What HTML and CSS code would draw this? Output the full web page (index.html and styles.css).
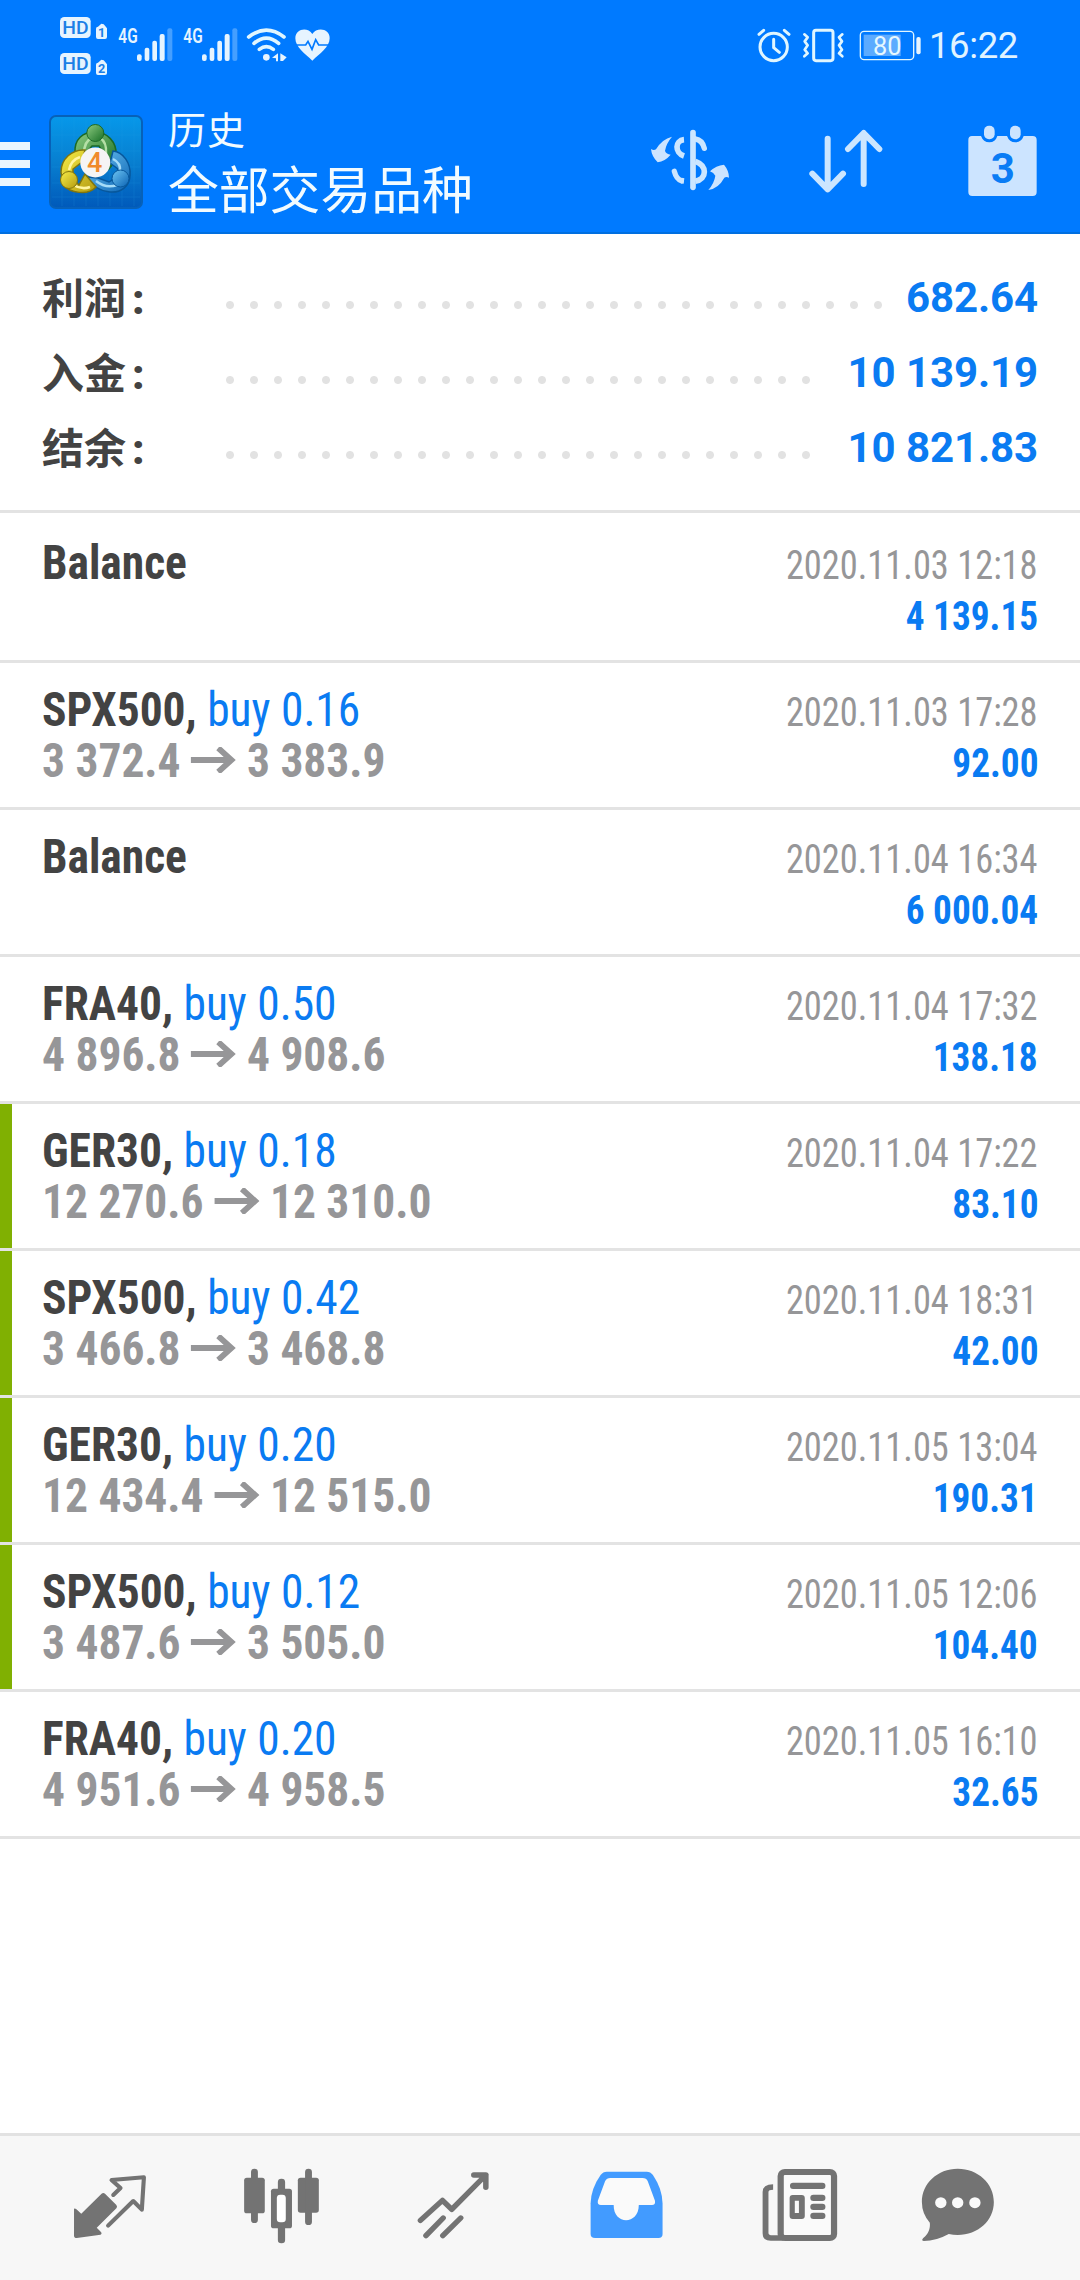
FILE: index.html
```html
<!DOCTYPE html>
<html lang="zh-CN">
<head>
<meta charset="utf-8">
<title>历史</title>
<link rel="stylesheet" href="styles.css">
</head>
<body>
<div class="screen">
  <header class="header">
    <div class="status">
      <svg class="status-left" width="290" height="92" viewBox="0 0 870 276">
        <g class="pale">
          <rect x="0" y="51" width="92" height="63" rx="13"/>
          <path d="M108 86q0-6 6-6l10-9q9 0 11 6l6 8v26q0 6-6 6h-21q-6 0-6-6z"/>
          <rect x="0" y="159" width="92" height="63" rx="13"/>
          <path d="M108 194q0-6 6-6l10-9q9 0 11 6l6 8v26q0 6-6 6h-21q-6 0-6-6z"/>
        </g>
        <g class="cut">
          <text class="hd" x="7" y="103" textLength="79" lengthAdjust="spacingAndGlyphs">HD</text>
          <text class="sim" x="114" y="110">1</text>
          <text class="hd" x="7" y="211" textLength="79" lengthAdjust="spacingAndGlyphs">HD</text>
          <text class="sim" x="114" y="218">2</text>
        </g>
        <g id="signal">
          <text class="net" x="175" y="128" textLength="58" lengthAdjust="spacingAndGlyphs">4G</text>
          <g class="pale">
            <rect x="231" y="163" width="14" height="20" rx="6"/>
            <rect x="254" y="143" width="14" height="40" rx="6"/>
            <rect x="277" y="122" width="14" height="61" rx="6"/>
            <rect x="299" y="102" width="15" height="81" rx="6"/>
            <rect x="322" y="85" width="15" height="98" rx="6" opacity=".3"/>
          </g>
        </g>
        <use href="#signal" x="195"/>
        <g class="pale-line" stroke-width="11">
          <path d="M566 111Q619 70 672 111M582 130Q619 99 656 130M598 148Q619 132 640 148"/>
        </g>
        <g class="pale">
          <circle cx="619" cy="172" r="10"/>
          <path d="M654 160v24h-6v-9l-12-2zM661 160l19 12-11 11h-8z"/>
          <path d="M757 182C736 162 706 142 706 115C706 86 743 80 757 102C771 80 810 86 809 115C809 142 778 162 757 182z"/>
        </g>
        <path class="cut-line" stroke-width="5" d="M706 135h31l7-11 12 24 11-29 9 16h34"/>
      </svg>
      <div class="status-right">
        <svg width="166" height="92" viewBox="50 0 498 276">
          <g class="pale-line" stroke-width="9">
            <circle cx="100" cy="141" r="41"/>
            <path d="M100 118v25l17 14M56 103l14-12M132 91l14 12"/>
            <rect x="220" y="91" width="58" height="91" rx="7"/>
            <path stroke-width="8" d="M192 103l10 9-9 12 9 12-9 13 9 11-10 9M306 103l-10 9 9 12-9 12 9 13-9 11 10 9"/>
            <rect x="360" y="94" width="160" height="85" rx="11" stroke-width="4"/>
          </g>
          <rect class="pale" x="370" y="104" width="111" height="64" opacity=".4"/>
          <rect class="pale" x="528" y="111" width="13" height="52" rx="6"/>
          <text class="level" x="398" y="164">80</text>
        </svg>
        <span class="clock">16:22</span>
      </div>
    </div>
    <div class="appbar">
      <div class="menu"><i></i><i></i><i></i></div>
      <svg class="logo" width="94" height="94" viewBox="0 0 94 94">
        <defs>
          <linearGradient id="tile" x2="0" y2="1"><stop offset="0" stop-color="#0698ea"/><stop offset=".5" stop-color="#087fd0"/><stop offset="1" stop-color="#0059ba"/></linearGradient>
          <linearGradient id="green" x2="1" y2="1"><stop stop-color="#8dcb80"/><stop offset="1" stop-color="#176e25"/></linearGradient>
          <linearGradient id="gold" x2="1" y2="1"><stop stop-color="#f7ee48"/><stop offset="1" stop-color="#b39a10"/></linearGradient>
          <linearGradient id="blue" x2="1" y2="1"><stop stop-color="#6fc6f3"/><stop offset="1" stop-color="#0a63b4"/></linearGradient>
        </defs>
        <rect x="1" y="1" width="92" height="92" rx="6" fill="url(#tile)" stroke="#0761b8" stroke-width="2"/>
        <path d="M13 3v88M25 3v88M37 3v88M49 3v88M61 3v88M73 3v88M85 3v88M3 20h88M3 36h88M3 52h88M3 68h88M3 82h88" stroke="#26a2e7" stroke-width=".7" opacity=".25"/>
        <path d="M26 38C25 24 34 17 46 17C58 17 68 27 67 40C66 46 63 51 60 54L56 40L50 31H43L36 39L34 46L27 44z" fill="url(#green)" stroke="#1c6a25" stroke-width="1.5"/>
        <path d="M35 39Q35 26 43 23M57 39Q58 27 51 23" fill="none" stroke="#b5dfa6" stroke-width="2.500"/>
        <path d="M64 36C74 37 82 48 81 60C81 72 71 78 61 77C51 76 43 71 38 62L49 63L60 67L66 63L69 54L61 48z" fill="url(#blue)" stroke="#07579b" stroke-width="1.500"/>
        <path d="M64 44Q72 48 71 56M47 66Q57 74 68 70" fill="none" stroke="#a5dcf8" stroke-width="2.500"/>
        <path d="M36 35C23 34 12 44 12 57L14 70C21 78 39 81 47 72L36 59L30 70L24 64L24 54L33 47z" fill="url(#gold)" stroke="#82750d" stroke-width="1.500"/>
        <path d="M31 42Q22 45 20 55M24 70Q33 75 41 72" fill="none" stroke="#fff5a0" stroke-width="2.500"/>
        <circle cx="46.300" cy="18" r="8.500" fill="url(#green)" stroke="#1c6a25"/>
        <circle cx="20" cy="65" r="8.500" fill="url(#gold)" stroke="#82750d"/>
        <circle cx="71.500" cy="63.500" r="8.500" fill="url(#blue)" stroke="#07579b"/>
        <circle cx="46.300" cy="47.500" r="15" fill="#f6f4f4"/>
        <text class="logo-num" x="38" y="57">4</text>
      </svg>
      <div class="titles">
        <span class="subtitle">历史</span>
        <span class="title">全部交易品种</span>
      </div>
      <div class="actions">
        <svg width="82" height="72" viewBox="90 75 246 216">
          <path class="soft" d="M93 147q8 5 15 1q18-31 48-38q-18 21-21 43q4 10 17 11q-17 20-39 23q-18-18-20-40zM327 233q-8-4-14 0q-17 32-48 37q18-21 21-43q-5-9-16-13q18-18 42-20q15 18 15 39z"/>
          <g class="soft-line">
            <path stroke-width="17" stroke-linecap="butt" d="M192 119C165 121 163 158 192 168"/>
            <path stroke-width="17" d="M219 98V262"/>
            <path stroke-width="16" d="M226 117Q247 120 253 145M163 214Q169 237 184 242"/>
            <path stroke-width="17" stroke-linecap="butt" d="M184 242L192 243M226 184C262 197 262 237 226 244M226 117l-7-1"/>
          </g>
        </svg>
        <svg class="sort" width="75" height="72" viewBox="565 75 225 216">
          <path class="soft-line" stroke-width="18" d="M624 116V268M578 221L624 268L670 221M732 252V100M685 147L732 99L779 147"/>
        </svg>
        <svg width="70" height="72" viewBox="1040 75 210 216">
          <path class="soft" d="M1055 108H1082Q1089 127 1107 127T1131 108H1160Q1167 127 1185 127T1210 108H1237Q1249 108 1249 120V276Q1249 288 1237 288H1056Q1044 288 1044 276V120Q1044 108 1055 108z"/>
          <rect class="soft" x="1091" y="77" width="32" height="41" rx="15"/>
          <rect class="soft" x="1169" y="77" width="32" height="41" rx="15"/>
          <text class="day" x="1111" y="249">3</text>
        </svg>
      </div>
    </div>
  </header>

  <section class="summary">
    <div class="sum"><span class="sum-label">利润<b>:</b></span><span class="leader"></span><span class="sum-value">682.64</span></div>
    <div class="sum"><span class="sum-label">入金<b>:</b></span><span class="leader"></span><span class="sum-value">10 139.19</span></div>
    <div class="sum"><span class="sum-label">结余<b>:</b></span><span class="leader"></span><span class="sum-value">10 821.83</span></div>
  </section>

  <main class="list">
    <article class="deal">
      <div class="line"><span class="name">Balance</span><span class="date">2020.11.03 12:18</span></div>
      <div class="line"><span class="amount">4 139.15</span></div>
    </article>
    <article class="deal">
      <div class="line"><span class="name">SPX500, <em>buy 0.16</em></span><span class="date">2020.11.03 17:28</span></div>
      <div class="line"><span class="prices">3 372.4 <svg class="arrow" viewBox="0 0 48 26"><path d="M0 13H42M29 1L43 13L29 25"/></svg> 3 383.9</span><span class="amount">92.00</span></div>
    </article>
    <article class="deal">
      <div class="line"><span class="name">Balance</span><span class="date">2020.11.04 16:34</span></div>
      <div class="line"><span class="amount">6 000.04</span></div>
    </article>
    <article class="deal">
      <div class="line"><span class="name">FRA40, <em>buy 0.50</em></span><span class="date">2020.11.04 17:32</span></div>
      <div class="line"><span class="prices">4 896.8 <svg class="arrow" viewBox="0 0 48 26"><path d="M0 13H42M29 1L43 13L29 25"/></svg> 4 908.6</span><span class="amount">138.18</span></div>
    </article>
    <article class="deal marked">
      <div class="line"><span class="name">GER30, <em>buy 0.18</em></span><span class="date">2020.11.04 17:22</span></div>
      <div class="line"><span class="prices">12 270.6 <svg class="arrow" viewBox="0 0 48 26"><path d="M0 13H42M29 1L43 13L29 25"/></svg> 12 310.0</span><span class="amount">83.10</span></div>
    </article>
    <article class="deal marked">
      <div class="line"><span class="name">SPX500, <em>buy 0.42</em></span><span class="date">2020.11.04 18:31</span></div>
      <div class="line"><span class="prices">3 466.8 <svg class="arrow" viewBox="0 0 48 26"><path d="M0 13H42M29 1L43 13L29 25"/></svg> 3 468.8</span><span class="amount">42.00</span></div>
    </article>
    <article class="deal marked">
      <div class="line"><span class="name">GER30, <em>buy 0.20</em></span><span class="date">2020.11.05 13:04</span></div>
      <div class="line"><span class="prices">12 434.4 <svg class="arrow" viewBox="0 0 48 26"><path d="M0 13H42M29 1L43 13L29 25"/></svg> 12 515.0</span><span class="amount">190.31</span></div>
    </article>
    <article class="deal marked">
      <div class="line"><span class="name">SPX500, <em>buy 0.12</em></span><span class="date">2020.11.05 12:06</span></div>
      <div class="line"><span class="prices">3 487.6 <svg class="arrow" viewBox="0 0 48 26"><path d="M0 13H42M29 1L43 13L29 25"/></svg> 3 505.0</span><span class="amount">104.40</span></div>
    </article>
    <article class="deal">
      <div class="line"><span class="name">FRA40, <em>buy 0.20</em></span><span class="date">2020.11.05 16:10</span></div>
      <div class="line"><span class="prices">4 951.6 <svg class="arrow" viewBox="0 0 48 26"><path d="M0 13H42M29 1L43 13L29 25"/></svg> 4 958.5</span><span class="amount">32.65</span></div>
    </article>
  </main>

  <nav class="tabs">
    <svg viewBox="197.500 90 244 300" preserveAspectRatio="none">
      <path class="ink" d="M215 266Q218 264 222 268L236 281L295 221Q300 217 305 221L338 255Q342 260 338 265L281 323L294 337Q297 342 292 344L223 354Q215 354 215 347z"/>
      <path class="ink-line" stroke-width="12" d="M329 225L350 204L324 180L418 172L412 269L387 243L314 317"/>
    </svg>
    <svg viewBox="697 90 244 300" preserveAspectRatio="none">
      <g class="ink">
        <rect x="709" y="173" width="60" height="107" rx="8"/><rect x="729" y="146" width="20" height="163" rx="10"/>
        <rect x="865" y="173" width="61" height="105" rx="8"/><rect x="886" y="146" width="20" height="169" rx="10"/>
        <rect x="787" y="206" width="61" height="119" rx="8"/><rect x="807" y="176" width="21" height="194" rx="10"/>
      </g>
      <rect x="804" y="224" width="26" height="83" rx="10" fill="#fff"/>
    </svg>
    <svg viewBox="1196.500 90 244 300" preserveAspectRatio="none">
      <path class="ink-line" stroke-width="16" d="M1221 301L1285 241L1312 268L1411 165M1376 165H1411V202M1237 347L1287 294M1286 347L1338 294"/>
    </svg>
    <svg viewBox="127.800 90 244 300" preserveAspectRatio="none">
      <path fill="#429bff" d="M194 155H310Q321 155 328 165Q355 206 356 250V342Q356 354 344 354H160Q147 354 147 342V250Q148 206 176 165Q183 155 194 155z"/>
      <path fill="#fafafa" d="M204 174Q194 174 189 184L168 242Q166 255 177 255H214C213 316 287 316 287 255H325Q336 255 334 242L313 184Q309 174 298 174z"/>
    </svg>
    <svg viewBox="627.300 90 244 300" preserveAspectRatio="none">
      <rect x="699" y="156" width="155" height="198" rx="12" fill="#fafafa" stroke="#737373" stroke-width="18"/>
      <path fill="none" stroke="#737373" stroke-width="17" d="M677 201Q655 201 655 216V340Q655 354 670 354H708"/>
      <g class="ink">
        <rect x="726" y="188" width="103" height="19" rx="9"/>
        <path fill-rule="evenodd" d="M734 225H760Q769 225 769 234V288Q769 297 760 297H734Q725 297 725 288V234Q725 225 734 225zM740 242V279H752V242z"/>
        <rect x="785" y="224" width="44" height="19" rx="9"/><rect x="785" y="251" width="44" height="19" rx="9"/><rect x="785" y="278" width="44" height="19" rx="9"/>
      </g>
    </svg>
    <svg class="last" viewBox="1091.900 90 244 300" preserveAspectRatio="none">
      <path class="ink" d="M1213 146C1272 146 1318 190 1318 246S1272 345 1213 345Q1200 345 1187 342Q1150 363 1115 363Q1106 362 1113 354C1128 342 1134 325 1132 308Q1109 281 1109 246C1109 190 1155 146 1213 146z"/>
      <g fill="#fafafa"><circle cx="1164" cy="248" r="16.500"/><circle cx="1213" cy="248" r="16.500"/><circle cx="1263" cy="248" r="16.500"/></g>
    </svg>
  </nav>
</div>
</body>
</html>
```
FILE: styles.css
```css
* { box-sizing: border-box; }

body {
  margin: 0;
  background: #fff;
  font-family: Roboto, "Noto Sans CJK SC", sans-serif;
}

svg { display: block; flex: none; }

.screen {
  width: 1080px;
  height: 2280px;
  display: flex;
  flex-direction: column;
}

.header {
  height: 234px;
  background: #007aff;
  border-bottom: 2px solid #006fe0;
}

.status {
  height: 92px;
  display: flex;
  justify-content: space-between;
  padding: 0 60px 0 60px;
}

.status-right { display: flex; }
.clock {
  width: 91px;
  margin-left: 6px;
  padding-top: 24px;
  font-size: 36.500px;
  letter-spacing: -.4px;
  line-height: 44px;
  color: #e0f3ff;
}

.pale { fill: #e6f4ff; }
.pale-line { fill: none; stroke: #e0f6ff; stroke-linecap: round; stroke-linejoin: round; }
.cut { fill: #1b7fe6; }
.cut-line { fill: none; stroke: #007aff; }
.hd { font-size: 55px; font-weight: 500; }
.sim { font-size: 38px; font-weight: 700; }
.net { font-size: 60px; font-weight: 600; fill: #e6f4ff; }
.level { font-size: 76px; fill: #e6f8ff; }

.appbar {
  height: 140px;
  display: flex;
  align-items: flex-start;
}
.menu {
  width: 30px;
  margin: 50px 19px 0 0;
  display: flex;
  flex-direction: column;
  gap: 10px;
}
.menu i { height: 8px; background: #eaf6ff; }
.logo { margin-top: 23px; }
.logo-num { font-size: 27px; font-weight: 500; fill: #f08a2c; }
.titles {
  margin: 16px 0 0 25px;
  display: flex;
  flex-direction: column;
  color: #f2fbff;
}
.subtitle { font-size: 38px; line-height: 46px; letter-spacing: 1px; }
.title { font-size: 50.800px; line-height: 76px; }

.actions {
  flex: 1;
  display: flex;
  justify-content: flex-end;
  gap: 76px;
  padding: 33px 43px 0 0;
}
.sort { margin-right: 8px; }
.soft { fill: #cce4ff; }
.soft-line { fill: none; stroke: #cce6ff; stroke-linecap: round; stroke-linejoin: round; }
.day { font-size: 126px; font-weight: 700; fill: #0a7cf5; }

.summary {
  height: 279px;
  padding: 26px 42px 0;
  border-bottom: 3px solid #e3e3e3;
}
.sum {
  height: 75px;
  display: flex;
  align-items: center;
  gap: 23px;
  font-size: 42px;
  font-weight: 700;
}
.sum-label { width: 153px; padding-bottom: 5px; color: #434343; }
.sum-label b { margin-left: 6px; }
.leader {
  flex: 1;
  height: 8px;
  margin-top: 15px;
  background: radial-gradient(circle at 12px 4px, #e2e2e2 3.500px, transparent 4.500px) 0 0 / 24px 8px repeat-x;
}
.sum-value { color: #0a7bf2; letter-spacing: -.1px; }

.list { flex: 1; padding-top: 3px; }
.deal {
  height: 147px;
  padding: 21px 42px 0;
  border-bottom: 3px solid #e3e3e3;
  font-family: "Roboto Condensed", Roboto, sans-serif;
  font-stretch: 75%;
}
.marked { box-shadow: inset 12px 0 #80b002; }
.line {
  height: 51px;
  display: flex;
  align-items: baseline;
  line-height: 51px;
  font-size: 48px;
  white-space: nowrap;
}
.line::before { content: "\200b"; width: 0; }
.name, .prices {
  font-weight: 700;
  color: #434343;
  transform: scaleX(.947);
  transform-origin: left;
}
.name em { font-style: normal; font-weight: 400; color: #0a7bf2; }
.prices { color: #969698; }
.date, .amount {
  margin-left: auto;
  font-size: 40px;
  transform-origin: right;
}
.date { color: #969698; transform: scaleX(.91); }
.amount { font-weight: 700; color: #0a7bf2; transform: scaleX(.932); }
.arrow {
  display: inline-block;
  width: 48px;
  height: 26px;
  vertical-align: 4px;
  fill: none;
  stroke: #969698;
  stroke-width: 6;
}

.tabs {
  height: 147px;
  display: flex;
  gap: 88px;
  padding: 14px 68px 0;
  background: #f7f7f7;
  border-top: 3px solid #e2e2e2;
}
.tabs svg { width: 84px; height: 100px; }
.tabs .last { margin-left: -12px; }
.ink { fill: #737373; }
.ink-line { fill: none; stroke: #737373; stroke-linecap: round; stroke-linejoin: round; }
```
